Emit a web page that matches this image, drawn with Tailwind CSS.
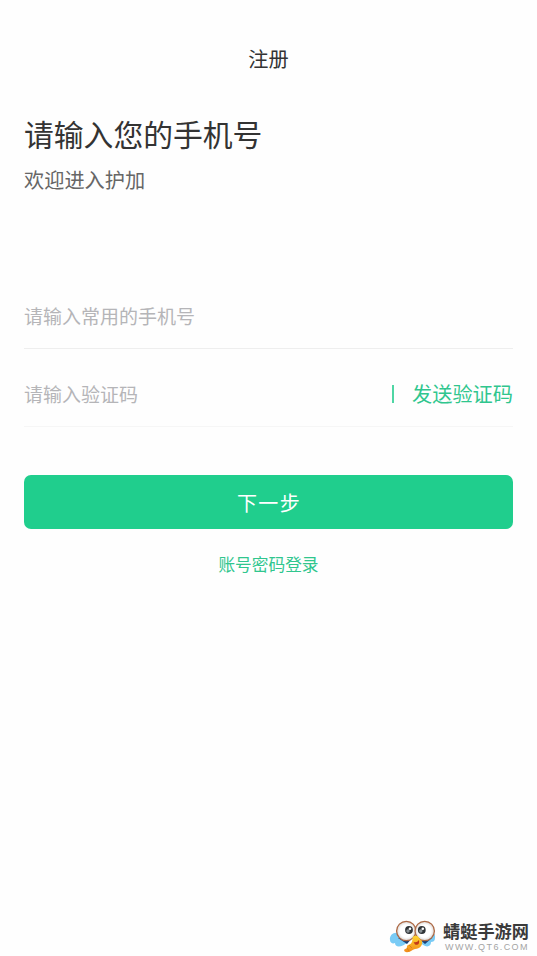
<!DOCTYPE html>
<html lang="zh-CN">
<head>
<meta charset="utf-8">
<title>注册</title>
<script src="https://cdn.jsdelivr.net/npm/@tailwindcss/browser@4"></script>
</head>
<body class="bg-white">
<main class="relative flex h-[956px] w-[537px] flex-col overflow-hidden bg-[#fefefe] px-6 font-['Noto_Sans_CJK_SC',sans-serif]">
  <header class="mt-11 text-center text-[20.2px] leading-[30px] text-[#333]">注册</header>
  <h1 class="mt-[37px] text-[29.8px] leading-[44px] text-[#333]">请输入您的手机号</h1>
  <p class="mt-[10px] text-[20.2px] leading-[30px] text-[#666]">欢迎进入护加</p>
  <div class="mt-[88px] flex h-[66px] items-start border-b border-[#eeeeee] text-[19px] leading-[66px] text-[#b5b5b8]"><span>请输入常用的手机号</span></div>
  <div class="flex h-[78px] items-center justify-between border-b border-[#f6f6f6]">
    <span class="mt-3 text-[19px] leading-[30px] text-[#b5b5b8]">请输入验证码</span>
    <div class="mt-3 flex items-center">
      <span class="mr-[18px] h-[18px] w-[2px] bg-[#4fd6a4]"></span>
      <button class="text-[20.2px] leading-[30px] text-[#30c68e]">发送验证码</button>
    </div>
  </div>
  <button class="mt-12 h-[54px] shrink-0 rounded-[7px] bg-[#20ce8d] pl-px pt-px text-[20px] tracking-[1.3px] leading-[54px] text-white">下一步</button>
  <a class="mt-[23px] text-center text-[16.7px] leading-[25px] text-[#30c68e]">账号密码登录</a>

  <div class="absolute left-[388px] top-[914px] flex">
    <svg class="h-[42px] w-[50px]" viewBox="388 914 50 42">
      <defs>
        <radialGradient id="eye"><stop offset="0.65" stop-color="#fff"/><stop offset="1" stop-color="#d9d5d2"/></radialGradient>
        <linearGradient id="body" x1="0" y1="0" x2="0" y2="1"><stop offset="0" stop-color="#ffd52e"/><stop offset="1" stop-color="#f18a1b"/></linearGradient>
      </defs>
      <path d="M402 935C396 930 389 934 390 940C390 943 393 944 395 943C395 948 402 948 409 941Z" fill="#79cbf5"/>
      <path d="M424 936C430 930 436 932 435 938C435 941 433 942 431 942C431 948 424 948 419 941Z" fill="#79cbf5"/>
      <path d="M398 938L407 944L413 937ZM418 938L425 944L432 938Z" fill="#173f78"/>
      <circle cx="406.3" cy="931" r="9.7" fill="url(#eye)" stroke="#ad6945" stroke-width="1.3"/>
      <circle cx="424.7" cy="931" r="9.7" fill="url(#eye)" stroke="#ad6945" stroke-width="1.3"/>
      <path d="M412.5 938C413 935 418 935 419 938L422 941C423 945 420 949 415 949C411 950 411 952 408 952C405 953 403 950 405 949C408 949 406 946 408 945C412 944 412.5 941 412.5 938Z" fill="url(#body)"/>
      <path d="M413.5 942Q417 943 419 940Q420 946 415 944.5Z" fill="#c33916"/>
      <path d="M409 945L412 948M407 948L409 951" stroke="#d77b19" stroke-width=".8"/>
      <circle cx="409" cy="930" r="3.9" fill="#303437"/><circle cx="421.8" cy="930" r="3.9" fill="#303437"/>
      <circle cx="408" cy="931" r="1.7" fill="#8a9296"/><circle cx="420.8" cy="931" r="1.7" fill="#8a9296"/>
      <circle cx="410" cy="928.7" r="1.3" fill="#fff"/><circle cx="422.8" cy="928.7" r="1.3" fill="#fff"/>
    </svg>
    <div class="ml-[5px] mt-[6px] whitespace-nowrap">
      <div class="text-[17.2px] font-bold leading-[22px] text-[#3b3b3b]">蜻蜓手游网</div>
      <div class="ml-[2px] font-['Liberation_Sans',sans-serif] text-[9px] leading-[10px] tracking-[1.4px] text-[#a4a4a4]">WWW.QT6.COM</div>
    </div>
  </div>
</main>
</body>
</html>
